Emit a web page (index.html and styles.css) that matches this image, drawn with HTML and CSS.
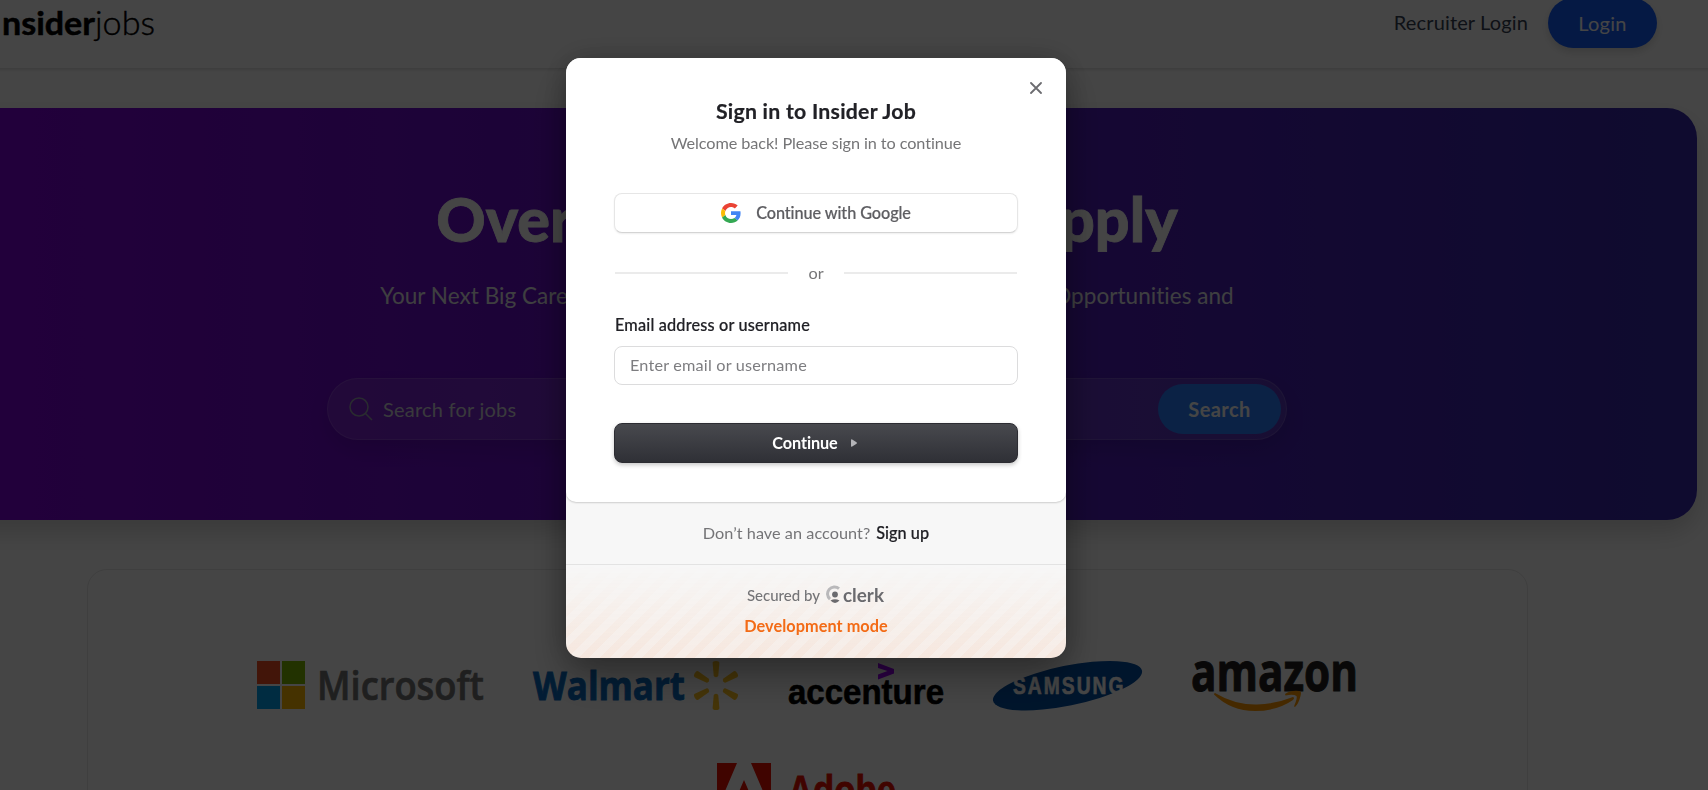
FILE: index.html
```html
<!DOCTYPE html>
<html lang="en">
<head>
<meta charset="utf-8">
<title>Insider Job</title>
<link rel="stylesheet" href="styles.css">
</head>
<body>
<div class="page">
  <header class="nav">
    <svg class="brand" width="164" height="50" viewBox="0 0 164 50">
      <text x="10" y="37" class="brand-bold" textLength="93" lengthAdjust="spacingAndGlyphs">nsider</text>
      <text x="103" y="37" class="brand-light" textLength="60" lengthAdjust="spacingAndGlyphs">jobs</text>
    </svg>
    <nav class="nav-actions">
      <a class="recruiter">Recruiter Login</a>
      <button class="login">Login</button>
    </nav>
  </header>

  <main>
    <section class="hero">
      <h1>Over 10,000+ jobs to apply</h1>
      <p class="tagline">Your Next Big Career Move Starts Right Here - Explore the Best Job Opportunities and<br>Take the First Step Toward Your Future!</p>
      <form class="searchbar">
        <svg class="search-icon" width="24" height="24" viewBox="0 0 24 24"><circle cx="10" cy="10" r="9"/><path d="M16.5 16.5L23 23"/></svg>
        <span class="search-hint">Search for jobs</span>
        <button class="search-btn" type="button">Search</button>
      </form>
    </section>

    <section class="partners">
      <svg width="226" height="50" viewBox="0 0 226 50">
        <path fill="#f25022" d="M0 0h23v23H0z"/><path fill="#7fba00" d="M25 0h23v23H25z"/>
        <path fill="#00a4ef" d="M0 25h23v23H0z"/><path fill="#ffb900" d="M25 25h23v23H25z"/>
        <text x="60" y="39" class="lg-microsoft" textLength="167" lengthAdjust="spacingAndGlyphs">Microsoft</text>
      </svg>
      <svg width="206" height="50" viewBox="0 0 206 50">
        <text x="0" y="39" class="lg-walmart" textLength="152" lengthAdjust="spacingAndGlyphs">Walmart</text>
        <g transform="translate(183 24.5)" fill="#ffc220">
          <path id="ray" d="M-3.4-22.5Q-3.4-24.5 0-24.5T3.4-22.5L2.3-10Q2-8.3 0-8.3T-2.3-10z"/>
          <use href="#ray" transform="rotate(60)"/><use href="#ray" transform="rotate(120)"/><use href="#ray" transform="rotate(180)"/>
          <use href="#ray" transform="rotate(240)"/><use href="#ray" transform="rotate(300)"/>
        </g>
      </svg>
      <svg width="155" height="50" viewBox="0 0 155 50">
        <path fill="#a100ff" d="M90 2l16 6v4.500l-16 6v-5l9.500-3.500L90 7z"/>
        <text x="0" y="43" class="lg-accenture" textLength="156" lengthAdjust="spacingAndGlyphs">accenture</text>
      </svg>
      <svg width="149" height="50" viewBox="0 0 149 50">
        <ellipse cx="74.500" cy="24.700" rx="76" ry="20" transform="rotate(-11.500 74.500 24.700)" fill="#034ea2"/>
        <g transform="translate(20 32.5) scale(.8 1)"><text class="lg-samsung" textLength="138">SAMSUNG</text></g>
      </svg>
      <svg width="164" height="50" viewBox="0 0 164 50">
        <text x="0" y="29.500" class="lg-amazon" textLength="167" lengthAdjust="spacingAndGlyphs">amazon</text>
        <path fill="#f90" d="M24 32q20 12 42 11.500 20-1 36-7.500 2 1 0 3-16 11-38 11Q40 50 23 33.500 23 32 24 32z"/>
        <path fill="#f90" d="M94 33q6-4 14-3 3 0 1.500 5-2 8-5.500 11-1.500 0-.5-2 3-7 2-9-3-2-11-.5z"/>
      </svg>
      <svg width="180" height="50" viewBox="0 0 180 50">
        <path fill="#eb1000" d="M1 0h20L1 47zM35 0h20v47zM28 17l13 30h-9l-4-9h-9z"/>
        <text x="72" y="42" class="lg-adobe" textLength="108" lengthAdjust="spacingAndGlyphs">Adobe</text>
      </svg>
    </section>
  </main>
</div>

<div class="overlay">
  <div class="modal" role="dialog">
    <div class="card">
      <svg class="close" width="12" height="12" viewBox="0 0 12 12"><path d="M1 1l10 10M11 1L1 11"/></svg>
      <h2>Sign in to Insider Job</h2>
      <p class="lead">Welcome back! Please sign in to continue</p>
      <button class="google">
        <svg width="20" height="20" viewBox="0 0 48 48">
          <path fill="#ea4335" d="M24 9.500c3.500 0 6.700 1.200 9.200 3.600l6.900-6.900C35.900 2.400 30.500 0 24 0 14.600 0 6.500 5.400 2.600 13.200l8 6.200C12.400 13.700 17.700 9.500 24 9.500z"/>
          <path fill="#4285f4" d="M47 24.600c0-1.600-.2-3.100-.4-4.600H24v9h12.900c-.6 3-2.300 5.500-4.800 7.200l7.700 6C44.400 38 47 31.800 47 24.600z"/>
          <path fill="#fbbc05" d="M10.500 28.600c-.5-1.500-.8-3-.8-4.600s.3-3.100.8-4.600l-8-6.200C.9 16.500 0 20.100 0 24s.9 7.500 2.600 10.800z"/>
          <path fill="#34a853" d="M24 48c6.500 0 11.900-2.100 15.900-5.800l-7.700-6c-2.200 1.500-4.900 2.300-8.200 2.300-6.300 0-11.600-4.200-13.500-9.900l-8 6.200C6.500 42.600 14.600 48 24 48z"/>
        </svg>
        <span>Continue with Google</span>
      </button>
      <div class="divider"><span>or</span></div>
      <label class="field-label" for="identifier">Email address or username</label>
      <input class="field" id="identifier" type="text" placeholder="Enter email or username">
      <button class="continue"><span>Continue</span>
        <svg width="8" height="10" viewBox="0 0 8 10"><path d="M1 2.200Q1 .8 2.200 1.500L6.500 4.200Q7.500 5 6.500 5.800L2.200 8.500Q1 9.200 1 7.800z"/></svg>
      </button>
    </div>
    <p class="signup"><span class="ask">Don’t have an account?</span><a>Sign up</a></p>
    <div class="secured">
      <div class="secured-row">
        <span class="by">Secured by</span>
        <svg width="58" height="20" viewBox="0 0 58 20">
          <path d="M13 3.600A6.500 6.500 0 0 0 4 14.200" class="clerk-arc"/>
          <circle cx="9" cy="9.500" r="2.900" class="clerk-ink"/>
          <path d="M4.500 15.600Q9 13 13.500 15.600 9 20.200 4.500 15.600z" class="clerk-ink"/>
          <text x="17" y="16.500" class="clerk-word" textLength="41" lengthAdjust="spacingAndGlyphs">clerk</text>
        </svg>
      </div>
      <p class="devmode">Development mode</p>
    </div>
  </div>
</div>
</body>
</html>
```
FILE: styles.css
```css
* { box-sizing: border-box; }
html, body { height: 100%; }
body { margin: 0; overflow: hidden; background: #fff; font-family: Lato, "Open Sans", sans-serif; font-variant-ligatures: none; }
h1, h2, p { margin: 0; }
button { border: 0; padding: 0; font-family: inherit; letter-spacing: inherit; }

/* Page, scrolled slightly right and down */
.page { width: 1800px; height: 817px; overflow: hidden; margin: -27px 0 0 -83px; }
.nav { height: 95px; padding: 0 60px 0 75px; display: flex; justify-content: space-between; align-items: center; box-shadow: 0 1px 4px rgba(0,0,0,.18); }
.brand { flex: none; margin-top: 5px; overflow: visible; }
.brand-bold { font: 700 33px Lato, sans-serif; stroke: #000; stroke-width: .5; }
.brand-light { font: 300 33px Lato, sans-serif; stroke: #000; stroke-width: .4; }
.nav-actions { display: flex; align-items: center; gap: 20px; margin-top: 5px; }
.recruiter { margin-top: -2px; font-size: 20px; color: #364153; letter-spacing: .14px; }
.login { width: 109px; height: 50px; padding-bottom: 1px; border-radius: 25px; background: #155dfc; color: #fff; font-size: 20px; letter-spacing: .3px; box-shadow: 0 4px 8px rgba(0,0,0,.15); }

.hero { width: 1780px; height: 412px; margin-top: 40px; border-radius: 30px; background: linear-gradient(90deg, #8200db, #372aac); box-shadow: 0 12px 24px rgba(0,0,0,.17); display: flex; flex-direction: column; align-items: center; color: #fff; }
h1 { margin-top: 73px; font-size: 61px; line-height: 75px; font-weight: 900; letter-spacing: .07px; -webkit-text-stroke: .8px #fff; white-space: nowrap; }
.tagline { margin-top: 22px; font-size: 22.500px; line-height: 36px; letter-spacing: .04px; text-align: center; color: #e5e7eb; white-space: nowrap; }
.searchbar { width: 960px; height: 62px; margin-top: 28px; border: 1px solid rgba(255,255,255,.13); border-radius: 31px; background: rgba(255,255,255,.1); box-shadow: 0 10px 20px rgba(0,0,0,.1); display: flex; align-items: center; padding: 0 5px 0 21px; }
.search-icon { fill: none; stroke: #99a1af; stroke-width: 1.500; }
.search-hint { margin: -1px 0 0 10px; font-size: 20px; letter-spacing: .22px; color: #d1d5dc; }
.search-btn { margin-left: auto; width: 123px; height: 50px; padding-bottom: 1px; border-radius: 25px; background: #2b7fff; color: #fff; font-size: 20px; font-weight: 700; letter-spacing: .4px; }

.partners { width: 1441px; height: 300px; margin: 49px 0 0 170px; padding: 91px 102px 0 99px; border: 1px solid #e8e8e8; border-radius: 20px; display: flex; flex-wrap: wrap; align-content: flex-start; justify-content: center; gap: 52px 49.500px; }
.partners svg { overflow: visible; }
.lg-microsoft { font: 600 40px "Open Sans", sans-serif; fill: #737373; stroke: #737373; stroke-width: .7; }
.lg-walmart { font: 700 40px "Open Sans", sans-serif; fill: #0a6abf; stroke: #0a6abf; stroke-width: .9; }
.lg-accenture { font: 700 35px "Liberation Sans", sans-serif; stroke: #000; stroke-width: .6; }
.lg-samsung { font: 700 24px "Liberation Sans", sans-serif; fill: #fff; stroke: #fff; stroke-width: .6; }
.lg-amazon { font: 700 53px "Open Sans", sans-serif; fill: #221f1f; stroke: #221f1f; stroke-width: 1; }
.lg-adobe { font: 700 42px "Liberation Sans", sans-serif; fill: #eb1000; stroke: #eb1000; stroke-width: .8; }

/* Sign-in dialog */
.overlay { position: fixed; inset: 0; padding: 58px 76px 0 0; background: rgba(0,0,0,.73); display: flex; justify-content: center; align-items: flex-start; }
.modal { width: 500px; height: 600px; border-radius: 15px; overflow: hidden; background: #f7f7f7; box-shadow: 0 20px 40px rgba(0,0,0,.3), 0 0 30px rgba(0,0,0,.2); }
.card { position: relative; height: 444px; padding: 0 48px; background: #fff; border-radius: 0 0 10px 10px; box-shadow: 0 0 2px rgba(0,0,0,.1), 0 1px 2px rgba(0,0,0,.14); display: flex; flex-direction: column; }
.close { position: absolute; top: 24px; right: 24px; fill: none; stroke: #6c6c70; stroke-width: 1.800; stroke-linecap: round; }
h2 { margin-top: 38px; font-size: 21.250px; line-height: 30px; font-weight: 700; letter-spacing: .26px; -webkit-text-stroke: .2px #212126; text-align: center; color: #212126; }
.lead { margin-top: 5px; font-size: 16.250px; line-height: 23px; letter-spacing: -.09px; text-align: center; color: #757577; }
.google { height: 40px; margin-top: 39px; padding-bottom: 1px; border: 1px solid #e6e6e6; border-bottom-color: #d4d4d4; border-radius: 8px; background: #fff; box-shadow: 0 1px 2px rgba(0,0,0,.07); display: flex; align-items: center; justify-content: center; gap: 15px; font-size: 16.250px; font-weight: 500; letter-spacing: -.08px; -webkit-text-stroke: .2px #5e5e62; color: #5e5e62; }
.divider { height: 20px; margin: 30px 1px 0; display: flex; align-items: center; gap: 20px; font-size: 16.250px; line-height: 18px; color: #757577; }
.divider::before, .divider::after { content: ""; flex: 1; height: 2px; background: #ebebeb; }
.field-label { margin: 31px 0 0 1px; font-size: 16.250px; line-height: 22px; font-weight: 500; letter-spacing: .18px; -webkit-text-stroke: .2px #212126; color: #212126; }
.field { height: 39px; margin-top: 10px; padding: 0 15px 2px; border: 1px solid #dcdcdd; border-radius: 8px; outline: 0; background: #fff; font: 16.250px Lato, sans-serif; letter-spacing: .18px; color: #212126; }
.field::placeholder { color: #7d7d80; opacity: 1; }
.continue { height: 40px; margin-top: 38px; padding: 0 2px 1px 0; border: 1px solid #2c2c32; border-radius: 8px; background: linear-gradient(#48494e, #2f3036); box-shadow: 0 2px 4px rgba(0,0,0,.22); display: flex; align-items: center; justify-content: center; gap: 12px; font-size: 16.250px; font-weight: 700; letter-spacing: -.1px; color: #fff; }
.continue svg { fill: #b4b4b8; margin-bottom: -1px; }
.signup { height: 63px; padding-bottom: 2px; border-bottom: 1px solid #e3e3e3; display: flex; align-items: center; justify-content: center; gap: 6px; font-size: 16.250px; letter-spacing: .04px; color: #747477; }
.signup a { font-weight: 500; -webkit-text-stroke: .2px #212126; color: #212126; }
.secured { position: relative; height: 93px; padding-top: 20px; }
.secured::before { content: ""; position: absolute; inset: 0; background: repeating-linear-gradient(-45deg, rgba(243,107,22,.07) 0 7.500px, rgba(243,107,22,.11) 7.500px 15px); -webkit-mask-image: linear-gradient(transparent, #000); mask-image: linear-gradient(transparent, #000); }
.secured-row { position: relative; height: 20px; padding-right: 1px; display: flex; align-items: center; justify-content: center; gap: 6px; font-size: 15px; color: #747477; }
.by { font-weight: 500; }
.clerk-arc { fill: none; stroke: #b9b8ba; stroke-width: 3; }
.clerk-ink { fill: #6a6a6e; }
.clerk-word { font: 700 19px Lato, sans-serif; fill: #6a6a6e; }
.devmode { position: relative; margin-top: 10px; font-size: 16.250px; line-height: 22px; font-weight: 700; letter-spacing: .07px; text-align: center; color: #f36b16; }
```
